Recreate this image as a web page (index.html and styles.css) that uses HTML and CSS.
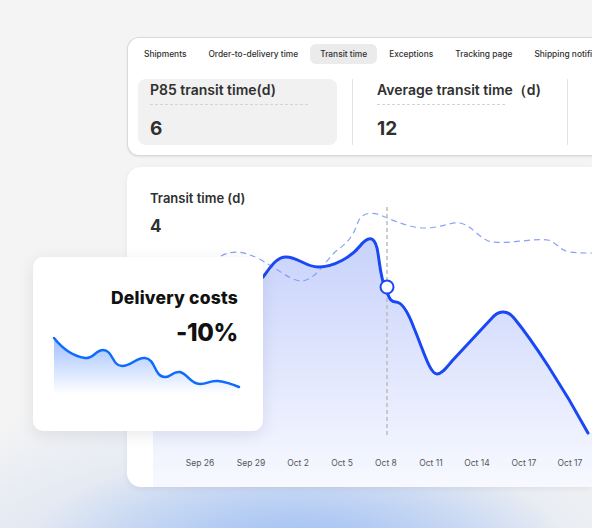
FILE: index.html
```html
<!DOCTYPE html>
<html>
<head>
<meta charset="utf-8">
<link rel="stylesheet" href="styles.css">
</head>
<body>
<div class="stage">
  <section class="top-card">
    <nav class="tabs">
      <span class="tab">Shipments</span>
      <span class="tab">Order-to-delivery time</span>
      <span class="tab active">Transit time</span>
      <span class="tab">Exceptions</span>
      <span class="tab">Tracking page</span>
      <span class="tab">Shipping notifica</span>
    </nav>
    <div class="stats">
      <div class="stat selected">
        <div class="stat-title">P85 transit time(d)</div>
        <div class="stat-rule rule-a"></div>
        <div class="stat-value">6</div>
      </div>
      <div class="divider d1"></div>
      <div class="stat">
        <div class="stat-title">Average transit time（d)</div>
        <div class="stat-rule rule-b"></div>
        <div class="stat-value">12</div>
      </div>
      <div class="divider d2"></div>
    </div>
  </section>

  <section class="chart-card">
    <svg class="chart" viewBox="127 167 465 320" width="465" height="320">
      <defs>
        <linearGradient id="area" x1="0" y1="230" x2="0" y2="487" gradientUnits="userSpaceOnUse">
          <stop offset="0" stop-color="#c6d1fb"/>
          <stop offset="1" stop-color="#f8f9ff"/>
        </linearGradient>
      </defs>
      <path class="area" d="M153,330 C190,320 240,300 263,277 C270,268 276,257 286,257 C298,257 306,267 318,267 C335,267 352,256 360,246 C368,236 374,236 377,248 C380,262 380,278 386,290 C389,297 390,302 396,302 C402,302 408,312 414,328 C424,352 430,374 437,374 C442,374 446,368 452,361 L492,318 C498,311 507,309 514,318 C532,340 562,385 588,433 L592,433 L592,487 L153,487 Z"/>
      <path class="dashed" d="M221,256 C230,251 240,251 250,255 C270,262 290,282 302,281 C315,280 325,262 335,252 C345,244 352,240 358,222 C362,212 372,212 380,215 C395,221 410,228 425,228 C440,228 450,222 460,223 C472,225 480,240 492,242 C510,244 535,238 548,240 C558,243 560,251 570,252 C580,253 585,253 592,253"/>
      <line class="cursor" x1="387" y1="207" x2="387" y2="438"/>
      <path class="line" d="M153,330 C190,320 240,300 263,277 C270,268 276,257 286,257 C298,257 306,267 318,267 C335,267 352,256 360,246 C368,236 374,236 377,248 C380,262 380,278 386,290 C389,297 390,302 396,302 C402,302 408,312 414,328 C424,352 430,374 437,374 C442,374 446,368 452,361 L492,318 C498,311 507,309 514,318 C532,340 562,385 588,433"/>
      <circle class="dot" cx="387" cy="287" r="6.5"/>
      <g class="axis">
        <text x="200" y="466">Sep 26</text>
        <text x="251" y="466">Sep 29</text>
        <text x="298" y="466">Oct 2</text>
        <text x="342" y="466">Oct 5</text>
        <text x="386" y="466">Oct 8</text>
        <text x="431" y="466">Oct 11</text>
        <text x="477" y="466">Oct 14</text>
        <text x="524" y="466">Oct 17</text>
        <text x="570" y="466">Oct 17</text>
      </g>
    </svg>
    <div class="chart-head">
      <div class="chart-title">Transit time (d)</div>
      <div class="chart-value">4</div>
    </div>
  </section>

  <section class="cost-card">
    <svg class="spark" viewBox="33 257 230 174" width="230" height="174">
      <defs>
        <linearGradient id="sparkfill" x1="0" y1="338" x2="0" y2="394" gradientUnits="userSpaceOnUse">
          <stop offset="0" stop-color="#9fbfff"/>
          <stop offset="1" stop-color="#ffffff"/>
        </linearGradient>
      </defs>
      <path class="spark-area" d="M54,338 C62,348 72,356 85,358 C93,359 96,350 103,350 C113,350 112,366 122,366 C132,366 136,357 145,358 C156,359 154,377 165,377 C172,377 172,371 180,372 C188,374 190,384 200,384 C208,384 210,380 218,381 C226,382 232,384 239,387 L239,394 L54,394 Z"/>
      <path class="spark-line" d="M54,338 C62,348 72,356 85,358 C93,359 96,350 103,350 C113,350 112,366 122,366 C132,366 136,357 145,358 C156,359 154,377 165,377 C172,377 172,371 180,372 C188,374 190,384 200,384 C208,384 210,380 218,381 C226,382 232,384 239,387"/>
    </svg>
    <div class="cost-text">
      <div class="cost-title">Delivery costs</div>
      <div class="cost-value">-10%</div>
    </div>
  </section>
</div>
</body>
</html>
```

FILE: styles.css
```css
html, body {
  margin: 0;
  padding: 0;
}
body {
  width: 592px;
  height: 528px;
  overflow: hidden;
  font-family: Inter, "Liberation Sans", sans-serif;
  color: #303030;
  background:
    radial-gradient(ellipse 270px 100px at 300px 548px, rgba(160,192,245,1), rgba(160,192,245,0) 100%),
    radial-gradient(ellipse 440px 170px at 260px 560px, rgba(200,215,240,0.85), rgba(200,215,240,0) 100%),
    #f4f4f4;
}
.stage {
  position: relative;
  padding: 37px 0 0 127px;
}

/* top card */
.top-card {
  box-sizing: border-box;
  width: 465px;
  height: 119px;
  background: #fff;
  border: 1px solid #d9d9d9;
  border-right: 0;
  border-radius: 12px 0 0 12px;
  box-shadow: 0 1px 2px rgba(0,0,0,0.08);
  padding: 6px 0 0 6px;
  overflow: hidden;
}
.tabs {
  display: flex;
  gap: 2px;
  white-space: nowrap;
}
.tab {
  height: 20px;
  line-height: 20px;
  padding: 0 10px;
  font-size: 8.4px;
  font-weight: 500;
  color: #303030;
  border-radius: 6px;
}
.tab.active {
  background: #ebebeb;
}
.stats {
  display: flex;
  margin-top: 15px;
  margin-left: 4px;
  height: 66px;
}
.stat {
  box-sizing: border-box;
  width: 199px;
  padding: 2px 12px 0;
  border-radius: 8px;
}
.stat.selected {
  background: #f1f1f1;
}
.stat-title {
  font-size: 14px;
  line-height: 18px;
  font-weight: 600;
  white-space: nowrap;
  color: #303030;
}
.stat-rule {
  margin-top: 5px;
  border-top: 1px dashed #d4d4d4;
}
.rule-a { width: 158px; }
.rule-b { width: 128px; }
.stat-value {
  margin-top: 13px;
  font-size: 19px;
  line-height: 22px;
  font-weight: 700;
  color: #303030;
}
.divider {
  width: 1px;
  background: #e3e3e3;
}
.d1 { margin: 0 12px 0 15px; }
.d2 { margin-left: 3px; }

/* chart card */
.chart-card {
  position: relative;
  box-sizing: border-box;
  width: 465px;
  height: 320px;
  margin-top: 11px;
  background: #fff;
  border-radius: 14px 0 0 14px;
  box-shadow: 0 2px 6px rgba(0,0,0,0.06);
  overflow: hidden;
}
.chart {
  position: absolute;
  left: 0;
  top: 0;
}
.chart .area { fill: url(#area); }
.chart .dashed {
  fill: none;
  stroke: #86a2f7;
  stroke-width: 1.2;
  stroke-dasharray: 6 4;
}
.chart .cursor {
  stroke: #bdbdbd;
  stroke-width: 1.5;
  stroke-dasharray: 4 3;
}
.chart .line {
  fill: none;
  stroke: #1a48f5;
  stroke-width: 3;
  stroke-linecap: round;
  stroke-linejoin: round;
}
.chart .dot {
  fill: #fff;
  stroke: #1a48f5;
  stroke-width: 2;
}
.axis text {
  font-family: Inter, "Liberation Sans", sans-serif;
  font-size: 8.5px;
  fill: #555;
  text-anchor: middle;
}
.chart-head {
  position: relative;
  padding: 22px 0 0 23px;
}
.chart-title {
  font-size: 13px;
  line-height: 18px;
  font-weight: 600;
  color: #303030;
}
.chart-value {
  margin-top: 9px;
  font-size: 17px;
  line-height: 20px;
  font-weight: 700;
  color: #303030;
}

/* delivery cost card */
.cost-card {
  position: absolute;
  left: 33px;
  top: 257px;
  width: 230px;
  height: 174px;
  background: #fff;
  border-radius: 10px;
  box-shadow: 0 4px 16px rgba(40,50,80,0.10);
}
.spark {
  position: absolute;
  left: 0;
  top: 0;
}
.spark-area { fill: url(#sparkfill); }
.spark-line {
  fill: none;
  stroke: #0e6bff;
  stroke-width: 2.5;
  stroke-linecap: round;
}
.cost-text {
  position: relative;
  padding: 31px 25px 0 0;
  text-align: right;
  color: #111;
}
.cost-title {
  font-size: 17.5px;
  line-height: 20px;
  font-weight: 800;
  letter-spacing: 0.2px;
}
.cost-value {
  margin-top: 10px;
  font-size: 24px;
  line-height: 30px;
  font-weight: 800;
  letter-spacing: -0.3px;
}
```
